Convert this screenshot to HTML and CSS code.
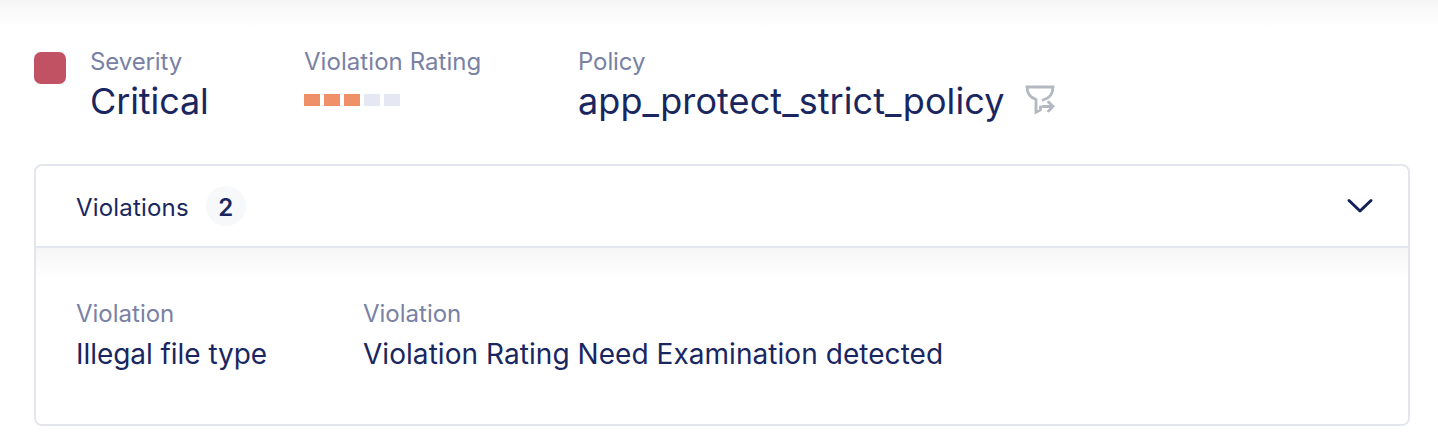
FILE: index.html
```html
<!DOCTYPE html>
<html lang="en">
<head>
<meta charset="utf-8">
<title>Violation details</title>
<link rel="stylesheet" href="styles.css">
</head>
<body>
<main class="details">
  <section class="summary">
    <span class="severity-swatch"></span>
    <div class="field severity">
      <div class="label severity-label">Severity</div>
      <div class="value severity-value">Critical</div>
    </div>
    <div class="field rating">
      <div class="label rating-label">Violation Rating</div>
      <div class="bars"><i class="on"></i><i class="on"></i><i class="on"></i><i></i><i></i></div>
    </div>
    <div class="field">
      <div class="label policy-label">Policy</div>
      <div class="value policy"><span class="policy-name">app_protect_strict_policy</span>
        <svg class="filter" width="36" height="36" viewBox="0 0 36 36"><path d="M21 18C27 16.500 31 12 31 5H5C5 11 8.500 15.500 14 17.500V30.300L18.500 28V25M21 24.500H31M26.500 20L31 24.500L26.500 29"/></svg>
      </div>
    </div>
  </section>
  <section class="card">
    <header class="card-head">
      <span class="card-title">Violations</span>
      <span class="count">2</span>
      <svg class="chevron" width="28" height="18" viewBox="0 0 28 18"><path d="M3 3.500L14 14L25 3.500"/></svg>
    </header>
    <div class="card-body">
      <div class="item first"><div class="label">Violation</div><div class="text short">Illegal file type</div></div>
      <div class="item"><div class="label">Violation</div><div class="text long">Violation Rating Need Examination detected</div></div>
    </div>
  </section>
</main>
</body>
</html>
```
FILE: styles.css
```css
* { box-sizing: border-box; }
body {
  margin: 0;
  height: 442px;
  overflow: hidden;
  background: linear-gradient(#f6f6f6, #fff 27px) #fff;
  font-family: Inter, "Liberation Sans", sans-serif;
  color: #19265f;
}
.details { padding: 46px 28px 0 34px; }
.summary { display: flex; height: 118px; }
.severity-swatch { width: 32px; height: 32px; margin: 6px 24px 0 0; border-radius: 7px; background: #c05263; }
.label { font-size: 24px; line-height: 32px; color: #7981a5; white-space: nowrap; }
.severity-label { letter-spacing: -0.1px; }
.rating-label { letter-spacing: 0.06px; }
.value { font-size: 36px; line-height: 44px; margin-top: 1px; white-space: nowrap; }
.severity-value { letter-spacing: -0.1px; }
.severity { width: 214px; }
.rating { width: 274px; }
.bars { display: flex; gap: 4px; margin-top: 16px; }
.bars i { width: 16px; height: 12px; background: #e5e8f2; }
.bars .on { background: #f09068; }
.policy { display: flex; }
.policy-label { letter-spacing: -0.1px; }
.policy-name { letter-spacing: 0.08px; }
.filter { margin: 3px 0 0 18px; }
.filter path { fill: none; stroke: #b3b8c1; stroke-width: 2.800; stroke-linejoin: miter; stroke-linecap: round; }
.card { height: 262px; overflow: hidden; border: 2px solid #e4e6ee; border-radius: 8px; background: #fff; }
.card-head { display: flex; align-items: center; height: 82px; padding: 0 34px 0 40px; border-bottom: 2px solid #e4e7f0; }
.card-title { margin-top: 2px; font-size: 24px; letter-spacing: 0.18px; }
.count { width: 40px; height: 40px; margin-left: 17px; border-radius: 50%; background: #f7f8fa; font-size: 24px; font-weight: 600; line-height: 43px; text-align: center; }
.chevron { margin-left: auto; }
.chevron path { fill: none; stroke: #14205a; stroke-width: 3; stroke-linecap: round; stroke-linejoin: round; }
.card-body { display: flex; height: 176px; padding: 50px 40px 0; background: linear-gradient(#f6f6f6, #fff 32px); }
.first { width: 287px; }
.text { font-size: 28px; line-height: 36px; margin-top: 6px; white-space: nowrap; }
.short { letter-spacing: -0.05px; }
.long { letter-spacing: 0.05px; }
```
